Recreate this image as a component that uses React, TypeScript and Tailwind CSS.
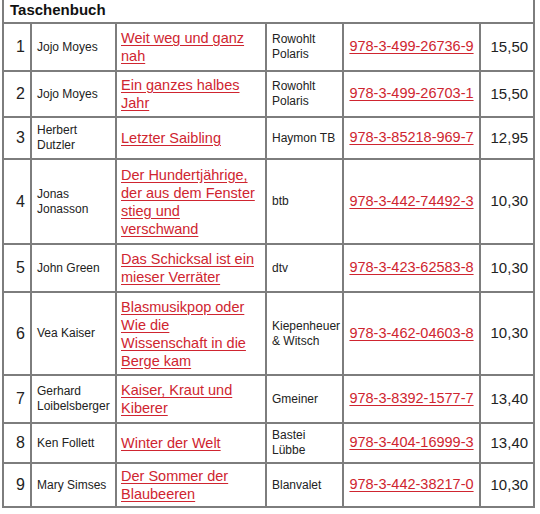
const books = [
  { n: 1, author: 'Jojo Moyes', title: ['Weit weg und ganz', 'nah'], publisher: 'Rowohlt Polaris', isbn: '978-3-499-26736-9', price: '15,50', h: 'h-[48px]' },
  { n: 2, author: 'Jojo Moyes', title: ['Ein ganzes halbes', 'Jahr'], publisher: 'Rowohlt Polaris', isbn: '978-3-499-26703-1', price: '15,50', h: 'h-[46px]' },
  { n: 3, author: 'Herbert Dutzler', title: ['Letzter Saibling'], publisher: 'Haymon TB', isbn: '978-3-85218-969-7', price: '12,95', h: 'h-[42px]' },
  { n: 4, author: 'Jonas Jonasson', title: ['Der Hundertjährige,', 'der aus dem Fenster', 'stieg und', 'verschwand'], publisher: 'btb', isbn: '978-3-442-74492-3', price: '10,30', h: 'h-[85px]' },
  { n: 5, author: 'John Green', title: ['Das Schicksal ist ein', 'mieser Verräter'], publisher: 'dtv', isbn: '978-3-423-62583-8', price: '10,30', h: 'h-[48px]' },
  { n: 6, author: 'Vea Kaiser', title: ['Blasmusikpop oder', 'Wie die', 'Wissenschaft in die', 'Berge kam'], publisher: 'Kiepenheuer & Witsch', isbn: '978-3-462-04603-8', price: '10,30', h: 'h-[83px]' },
  { n: 7, author: 'Gerhard Loibelsberger', title: ['Kaiser, Kraut und', 'Kiberer'], publisher: 'Gmeiner', isbn: '978-3-8392-1577-7', price: '13,40', h: 'h-[48px]' },
  { n: 8, author: 'Ken Follett', title: ['Winter der Welt'], publisher: 'Bastei Lübbe', isbn: '978-3-404-16999-3', price: '13,40', h: 'h-[40px]' },
  { n: 9, author: 'Mary Simses', title: ['Der Sommer der', 'Blaubeeren'], publisher: 'Blanvalet', isbn: '978-3-442-38217-0', price: '10,30', h: 'h-[44px]' },
];

const cell = 'border-2 border-[#7d7d7d] align-middle';
const link = 'text-[#cf2530] underline decoration-[#cf2530] underline-offset-2';

export default function App() {
  return (
    <div className="h-[514px] w-[540px] overflow-hidden bg-white pl-[2px] font-['Liberation_Sans',Arial,sans-serif] text-[#222]">
      <table className="w-[531px] table-fixed border-collapse">
        <colgroup>
          <col className="w-[28px]" />
          <col className="w-[85px]" />
          <col className="w-[150px]" />
          <col className="w-[77px]" />
          <col className="w-[137px]" />
          <col className="w-[54px]" />
        </colgroup>
        <tbody>
          <tr className="h-[23px]">
            <td colSpan={6} className="border-2 border-t-0 border-[#7d7d7d] px-[6px] pb-[2px] text-[15px] font-bold leading-[18px] text-[#111]">
              Taschenbuch
            </td>
          </tr>
          {books.map((b) => (
            <tr key={b.n} className={b.h}>
              <td className={`${cell} pr-[5px] text-right text-[16px]`}>{b.n}</td>
              <td className={`${cell} px-[5px] text-[12px] leading-[15px]`}>{b.author}</td>
              <td className={`${cell} pl-[4px] pr-[2px] whitespace-nowrap text-[14.5px] leading-[18px]`}>
                {b.title.map((line, i) => (
                  <div key={i}>
                    <a href="#" className={link}>
                      {line}
                    </a>
                  </div>
                ))}
              </td>
              <td className={`${cell} px-[5px] text-[12px] leading-[15px]`}>{b.publisher}</td>
              <td className={`${cell} px-[2px] whitespace-nowrap text-center text-[14.5px]`}>
                <a href="#" className={link}>
                  {b.isbn}
                </a>
              </td>
              <td className={`${cell} pr-[5px] text-right text-[15px]`}>{b.price}</td>
            </tr>
          ))}
        </tbody>
      </table>
    </div>
  );
}
